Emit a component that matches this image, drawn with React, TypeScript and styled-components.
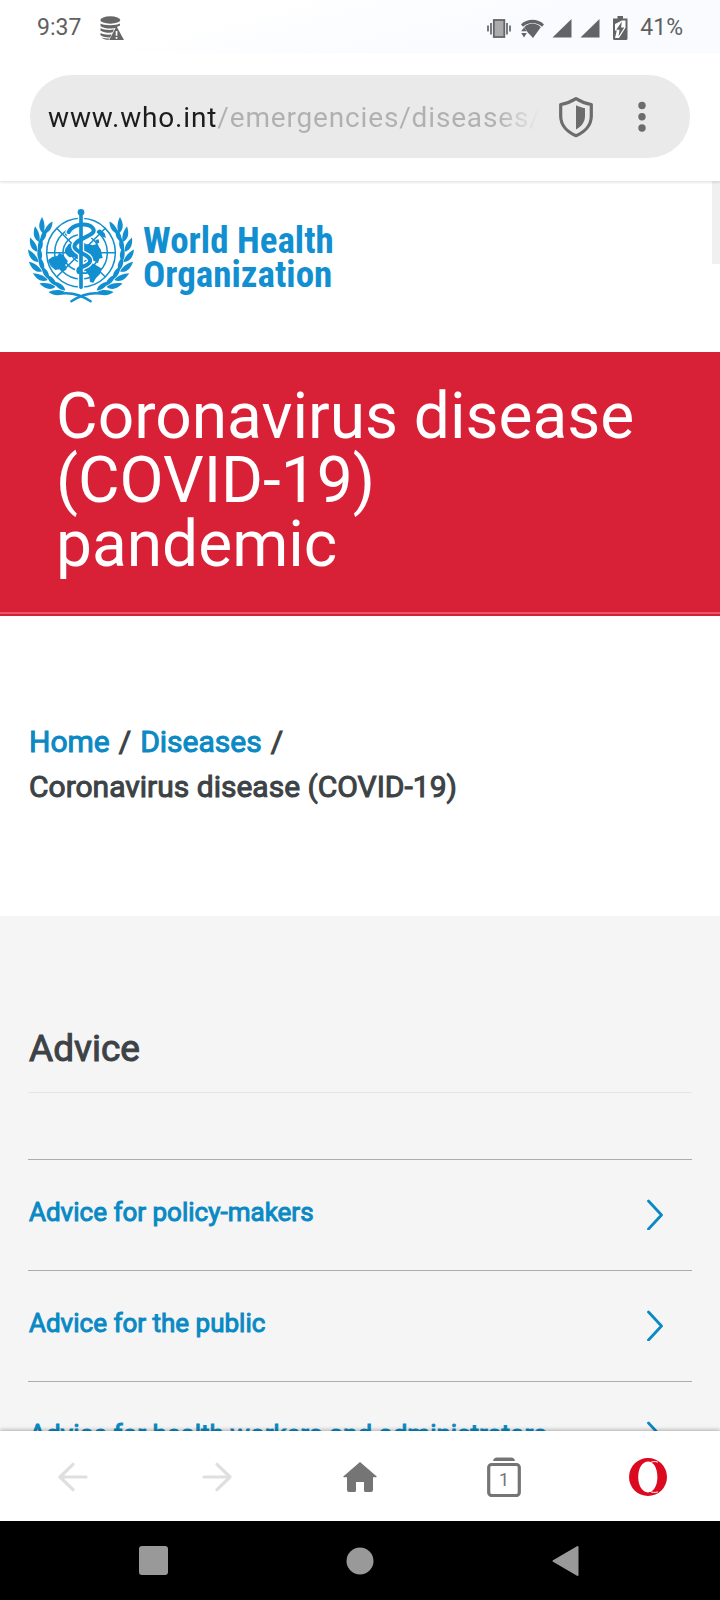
import React from 'react';
import styled, { createGlobalStyle } from 'styled-components';

const GlobalStyle = createGlobalStyle`
  * { box-sizing: border-box; }
  body {
    margin: 0;
    background: #ffffff;
    font-family: Roboto, "Liberation Sans", sans-serif;
  }
  button { border: 0; padding: 0; background: none; font: inherit; cursor: pointer; }
  svg { display: block; flex: none; }
`;

const brandBlue = '#118fd0';
const linkBlue = '#0a89c4';
const ink = '#3c4245';

const Screen = styled.div`
  display: flex;
  flex-direction: column;
  height: 100vh;
  overflow: hidden;
`;

const StatusBar = styled.header`
  display: flex;
  justify-content: space-between;
  align-items: center;
  flex: none;
  height: 53px;
  padding: 2px 37px 0;
  background: linear-gradient(165deg, #ffffff 30%, #f9fbff 65%);
  color: #606060;
  font-size: 23px;
  line-height: 28px;
`;

const StatusGroup = styled.div<{ $gap: number }>`
  display: flex;
  align-items: center;
  gap: ${(p) => p.$gap}px;
`;

const AddressBar = styled.div`
  position: relative;
  z-index: 1;
  flex: none;
  padding: 22px 30px 23px;
  background: #ffffff;
  box-shadow: 0 2px 2px rgba(0, 0, 0, 0.09);
`;

const AddressPill = styled.div`
  display: flex;
  align-items: center;
  height: 83px;
  padding: 1px 18px 0;
  border-radius: 42px;
  background: #eaeaea;
`;

const AddressInput = styled.input`
  flex: 1;
  min-width: 0;
  height: 48px;
  padding: 0;
  border: 0;
  outline: 0;
  color: transparent;
  caret-color: #1c1c1c;
  background: linear-gradient(
      90deg,
      #1c1c1c 168px,
      #b0b0b0 168px,
      #b0b0b0 calc(100% - 44px),
      #eaeaea 100%
    )
    text;
  font-family: inherit;
  font-size: 28px;
  letter-spacing: 0.03em;
`;

const AddressButton = styled.button`
  display: flex;
  align-items: center;
  justify-content: center;
  width: 60px;
  height: 64px;
  margin-left: 6px;
`;

const Page = styled.main`
  flex: 1;
  min-height: 0;
  overflow: hidden;
  position: relative;
`;

const ScrollThumb = styled.div`
  position: absolute;
  top: 0;
  right: 0;
  width: 8px;
  height: 83px;
  background: #f0f0f0;
`;

const SiteHeader = styled.div`
  display: flex;
  padding: 19px 20px 42px;
`;

const SiteLogo = styled.a`
  display: flex;
  color: ${brandBlue};
  text-decoration: none;
`;

const Wordmark = styled.span`
  padding: 24px 0 0 3px;
  font: 700 37px/34px "Roboto Condensed", "Liberation Sans Narrow", sans-serif;
`;

const Line = styled.span`
  display: block;
`;

const Banner = styled.div`
  padding: 33px 72px 37px 56px;
  background: #d82137;
  border-bottom: 2px solid #d82137;
  box-shadow: inset 0 -2px #ea5568;
`;

const BannerTitle = styled.h1`
  margin: 0;
  color: #ffffff;
  font-size: 64px;
  font-weight: 400;
  line-height: 64px;
`;

const Breadcrumb = styled.nav`
  padding: 103px 28px 107px 29px;
  color: ${ink};
  font-size: 30px;
  line-height: 45px;
  -webkit-text-stroke: 1px;
`;

const Crumb = styled.a`
  color: ${linkBlue};
  text-decoration: none;
`;

const Separator = styled.span`
  margin: 0 9px;
`;

const AdviceSection = styled.section`
  padding: 109px 28px 40px;
  background: #f5f5f5;
`;

const SectionTitle = styled.h2`
  margin: 0 0 66px;
  padding: 0 0 19px 1px;
  border-bottom: 1px solid #e5e5e5;
  color: ${ink};
  font-size: 37px;
  font-weight: 400;
  line-height: 48px;
  -webkit-text-stroke: 1px;
`;

const AdviceList = styled.ul`
  margin: 0;
  padding: 0;
  list-style: none;
`;

const AdviceItem = styled.li`
  border-top: 1px solid #acacac;
`;

const AdviceLink = styled.a`
  display: flex;
  align-items: center;
  justify-content: space-between;
  height: 110px;
  padding: 0 28px 3px 1px;
  color: ${linkBlue};
  font-size: 26px;
  line-height: 32px;
  text-decoration: none;
  -webkit-text-stroke: 1px;
`;

const AdviceLabel = styled.span`
  padding-bottom: 3px;
`;

const BrowserBar = styled.nav`
  position: relative;
  z-index: 1;
  display: grid;
  grid-template-columns: repeat(5, 1fr);
  flex: none;
  height: 90px;
  padding: 1px 0 0 1px;
  background: #ffffff;
  box-shadow: 0 -1px 4px rgba(0, 0, 0, 0.3);
`;

const SystemBar = styled.nav`
  display: grid;
  grid-template-columns: repeat(3, 1fr);
  flex: none;
  height: 79px;
  padding: 0 50px;
  background: #000000;
`;

const BarButton = styled.button`
  display: flex;
  align-items: center;
  justify-content: center;
`;

const DatabaseAlertIcon = () => (
  <svg width="24" height="24" viewBox="0 0 24 24" fill="#676767" aria-hidden="true">
    <ellipse cx="10.3" cy="4" rx="10" ry="3.7" />
    <path d="M.5 7.5c3 2.300 16 2.300 19.500 0v2c-2.500 1-3 1.300-4 2.600-5 .8-13 .2-15.500-2.200z" />
    <path d="M.5 12.200c3 1.700 9 2 13.500 1.400l-1.600 3c-4 .4-9.500-.2-11.900-2.200z" />
    <path d="M.5 17c2.500 1.500 7 2 11 1.600l-1.400 2.800c-3.500.1-7.500-.6-9.600-2.200z" />
    <path d="M1.500 21.200c2 1 5 1.300 8 1.300l-.8 1.300c-3 0-5.700-.8-7.200-2.600z" />
    <path fillRule="evenodd" d="M16.500 10.300 24 24H9.200zM15.700 15v4.800h1.700V15zm0 6v1.800h1.700V21z" />
  </svg>
);

const VibrateIcon = () => (
  <svg width="26" height="24" viewBox="0 0 26 24" aria-hidden="true">
    <rect x="6.800" y="4" width="10.500" height="17" fill="#ababab" stroke="#626466" strokeWidth="1.800" />
    <path d="M1 9.500v6M4 7v11.500M20 7v11.500M23 9.500v6" stroke="#626466" strokeWidth="1.700" />
  </svg>
);

const WifiIcon = () => (
  <svg width="23" height="24" viewBox="0 0 23 24" fill="#626466" aria-hidden="true">
    <path d="M0 8.500C6 2.300 17 2.300 23 8.500L21 10.700C15.500 5.700 7.500 5.700 2 10.700z" />
    <path d="M3.200 11.300c4.600-5 12-5 16.600 0L12 22 6.800 16.500z" />
    <path d="M.2 15.300 3 11.500l2.800 3.800zM.2 17h5.600L3 21.500z" />
  </svg>
);

const SignalIcon = () => (
  <svg width="20" height="24" viewBox="0 0 20 24" fill="#626466" aria-hidden="true">
    <path d="M19.500 3v18.500H.5z" />
  </svg>
);

const BatteryIcon = () => (
  <svg width="24" height="24" viewBox="0 0 24 24" aria-hidden="true">
    <path d="M9.500 0h5.500v2.500h4.500V22.500q0 1.500-1.500 1.500H6.500Q5 24 5 22.500V2.500h4.500z" fill="#626466" />
    <path d="M14 4.500h3.500v7.300L11 22H7l1.800-7.500H7V8z" fill="#ffffff" />
    <path d="M13.800 5.500 8.300 13.800h3.200L10.500 20.500l5.800-9h-3.200z" fill="#626466" />
  </svg>
);

const ShieldIcon = () => (
  <svg width="36" height="42" viewBox="0 0 36 42" aria-hidden="true">
    <path
      d="M18 2.700C13.500 5.500 8 7.700 2.700 8.500V20c0 9 6.300 16 15.300 19.700C27 36 33.300 29 33.300 20V8.500C28 7.700 22.500 5.500 18 2.700z"
      fill="none"
      stroke="#6c6c6c"
      strokeWidth="3.200"
      strokeLinejoin="round"
    />
    <path d="M18 9.300c3 1.500 6 2.400 9 2.900V20c0 6-3.500 10.500-9 13.500z" fill="#6c6c6c" />
  </svg>
);

const MoreIcon = () => (
  <svg width="8" height="32" viewBox="0 0 8 32" fill="#6c6c6c" aria-hidden="true">
    <circle cx="4" cy="4.500" r="3.700" />
    <circle cx="4" cy="15.700" r="3.700" />
    <circle cx="4" cy="27" r="3.700" />
  </svg>
);

const ChevronIcon = () => (
  <svg width="18" height="32" viewBox="0 0 18 32" aria-hidden="true">
    <path
      d="M2.500 3 15.500 17 2.500 31"
      fill="none"
      stroke={linkBlue}
      strokeWidth="2.800"
      strokeLinecap="round"
      strokeLinejoin="round"
    />
  </svg>
);

const ArrowIcon = ({ forward = false }: { forward?: boolean }) => (
  <svg width="30" height="30" viewBox="0 0 30 30" aria-hidden="true">
    <path
      d={forward ? 'M2 15H28M15 2.300 28 15 15 27.700' : 'M28 15H2M15 2.300 2 15 15 27.700'}
      fill="none"
      stroke="#dfdfdf"
      strokeWidth="3.200"
      strokeLinecap="round"
      strokeLinejoin="round"
    />
  </svg>
);

const HomeIcon = () => (
  <svg width="34" height="30" viewBox="0 0 34 30" fill="#757575" aria-hidden="true">
    <path d="M17 0 33.500 14.300q.6.900-.5.900H30V28q0 2-2 2h-5.500q-1.500 0-1.500-1.500V20h-8v8.500q0 1.500-1.500 1.500H6q-2 0-2-2V15.200H1q-1.100 0-.5-.9z" />
  </svg>
);

const TabsIcon = () => (
  <svg width="34" height="40" viewBox="0 0 34 40" aria-hidden="true">
    <path d="M6 4q.5-3.500 4-3.500h14q3.500 0 4 3.500z" fill="#757575" />
    <rect x="1.700" y="7.500" width="30.600" height="31" rx="3" fill="none" stroke="#757575" strokeWidth="3.200" />
    <text x="17" y="29" textAnchor="middle" fontSize="18" fill="#757575">1</text>
  </svg>
);

const OperaIcon = () => (
  <svg width="38" height="38" viewBox="0 0 38 38" aria-hidden="true">
    <path
      fillRule="evenodd"
      fill="#dc0a20"
      d="M19 0a19 19 0 1 0 0 38 19 19 0 0 0 0-38zM19 3.600c5.400 0 9.400 6.500 9.400 15.400s-4 15.400-9.400 15.400S9.200 27.900 9.200 19 13.600 3.600 19 3.600z"
    />
    <path
      d="M21 4.600C23.500 3.400 26 3.200 28.500 4M21 33.400C23.500 34.600 26 34.800 28.500 34"
      fill="none"
      stroke="#ffffff"
      strokeWidth="1"
      strokeLinecap="round"
    />
  </svg>
);

const laurelLeaves = [113, 127, 141, 155, 169, 183, 197, 210];

const LaurelBranch = () => (
  <g>
    {laurelLeaves.map((angle) => {
      const rad = (angle * Math.PI) / 180;
      const x = 183 + 130 * Math.cos(rad);
      const y = 160 + 124 * Math.sin(rad);
      return (
        <g key={angle} transform={`translate(${x} ${y}) rotate(${(angle - 180) * 0.9})`}>
          <path d="M0 2C-17 0-27-16-25-40C-12-30-1-16 0 2z" />
          <path d="M4 2C15-8 18-24 9-42C-1-28-3-12 4 2z" />
        </g>
      );
    })}
  </g>
);

const Emblem = () => (
  <svg width="120" height="110" viewBox="0 0 360 330" fill={brandBlue} aria-hidden="true">
    <g fill="none" stroke={brandBlue} strokeWidth="4.500">
      <circle cx="183" cy="158" r="103" />
      <circle cx="183" cy="158" r="79" />
      <circle cx="183" cy="158" r="54" />
      <circle cx="183" cy="158" r="28" />
      <path d="M80 158H286M110 85 256 231M256 85 110 231" />
    </g>
    <path d="M84 180l14-10 14-2 6-10 12 8 14 18-8 10 4 14-12 8-10-8-12 2-14-12z" />
    <path d="M136 146l10-14 16-6 8 10 10-6v42l-8 6-12-8-12 2-8-8-6-10z" />
    <path d="M190 136l16-4 12 4 12-4 12 16 6 26-10 2-4 14-12-8-10 4-14-10-8-14z" />
    <path d="M194 196l18-6 14 4 20 12-6 16-12 12-8 14-10-2-2-18-10-14z" />
    <path d="M134 102l10-16 16-8 8 6-12 14-12 6-6 4z" />
    <path d="M228 94l12-6 14 12 4 14-10-4-14-10zM226 120l10-2 2 10-8 4z" />
    <g fill="none" strokeLinecap="round">
      <path d="M183 40V262" stroke="#ffffff" strokeWidth="19" />
      <path
        d="M146 96C158 72 202 66 218 84C238 108 156 116 164 142C170 160 214 164 210 184C206 202 168 198 176 216"
        stroke="#ffffff"
        strokeWidth="20"
      />
      <path d="M183 38V262" stroke={brandBlue} strokeWidth="11" />
      <path
        d="M146 96C158 72 202 66 218 84C238 108 156 116 164 142C170 160 214 164 210 184C206 202 168 198 176 216"
        stroke={brandBlue}
        strokeWidth="12"
      />
      <path d="M176 216Q188 222 204 218" stroke={brandBlue} strokeWidth="5" />
    </g>
    <circle cx="183" cy="37" r="10" />
    <LaurelBranch />
    <g transform="translate(366 0) scale(-1 1)">
      <LaurelBranch />
    </g>
    <g fill="none" stroke={brandBlue} strokeWidth="7" strokeLinecap="round">
      <path d="M122 281C156 276 182 284 212 304" />
      <path d="M244 281C210 276 184 284 154 304" />
    </g>
  </svg>
);

const adviceLinks = [
  'Advice for policy-makers',
  'Advice for the public',
  'Advice for health workers and administrators',
];

export default function App() {
  return (
    <Screen>
      <GlobalStyle />
      <StatusBar>
        <StatusGroup $gap={19}>
          <span>9:37</span>
          <DatabaseAlertIcon />
        </StatusGroup>
        <StatusGroup $gap={8}>
          <VibrateIcon />
          <WifiIcon />
          <SignalIcon />
          <SignalIcon />
          <BatteryIcon />
          <span>41%</span>
        </StatusGroup>
      </StatusBar>

      <AddressBar>
        <AddressPill>
          <AddressInput aria-label="Address" type="text" defaultValue="www.who.int/emergencies/diseases/" />
          <AddressButton aria-label="Site protection">
            <ShieldIcon />
          </AddressButton>
          <AddressButton aria-label="More options">
            <MoreIcon />
          </AddressButton>
        </AddressPill>
      </AddressBar>

      <Page>
        <ScrollThumb />
        <SiteHeader>
          <SiteLogo href="#home">
            <Emblem />
            <Wordmark>
              <Line>World Health</Line>
              <Line>Organization</Line>
            </Wordmark>
          </SiteLogo>
        </SiteHeader>

        <Banner>
          <BannerTitle>Coronavirus disease (COVID-19) pandemic</BannerTitle>
        </Banner>

        <Breadcrumb aria-label="Breadcrumb">
          <Line>
            <Crumb href="#home">Home</Crumb>
            <Separator>/</Separator>
            <Crumb href="#diseases">Diseases</Crumb>
            <Separator>/</Separator>
          </Line>
          <Line>Coronavirus disease (COVID-19)</Line>
        </Breadcrumb>

        <AdviceSection>
          <SectionTitle>Advice</SectionTitle>
          <AdviceList>
            {adviceLinks.map((label) => (
              <AdviceItem key={label}>
                <AdviceLink href="#advice">
                  <AdviceLabel>{label}</AdviceLabel>
                  <ChevronIcon />
                </AdviceLink>
              </AdviceItem>
            ))}
          </AdviceList>
        </AdviceSection>
      </Page>

      <BrowserBar aria-label="Browser">
        <BarButton aria-label="Back">
          <ArrowIcon />
        </BarButton>
        <BarButton aria-label="Forward">
          <ArrowIcon forward />
        </BarButton>
        <BarButton aria-label="Home">
          <HomeIcon />
        </BarButton>
        <BarButton aria-label="Tabs">
          <TabsIcon />
        </BarButton>
        <BarButton aria-label="Opera menu">
          <OperaIcon />
        </BarButton>
      </BrowserBar>

      <SystemBar aria-label="System">
        <BarButton aria-label="Recent apps">
          <svg width="29" height="29" viewBox="0 0 29 29" aria-hidden="true">
            <rect width="29" height="29" rx="3" fill="#999999" />
          </svg>
        </BarButton>
        <BarButton aria-label="Home screen">
          <svg width="28" height="28" viewBox="0 0 28 28" aria-hidden="true">
            <circle cx="14" cy="14" r="13.500" fill="#999999" />
          </svg>
        </BarButton>
        <BarButton aria-label="System back">
          <svg width="30" height="32" viewBox="0 0 30 32" aria-hidden="true">
            <path d="M1.500 16 25.500 2V30z" fill="#999999" stroke="#999999" strokeWidth="2" strokeLinejoin="round" />
          </svg>
        </BarButton>
      </SystemBar>
    </Screen>
  );
}
